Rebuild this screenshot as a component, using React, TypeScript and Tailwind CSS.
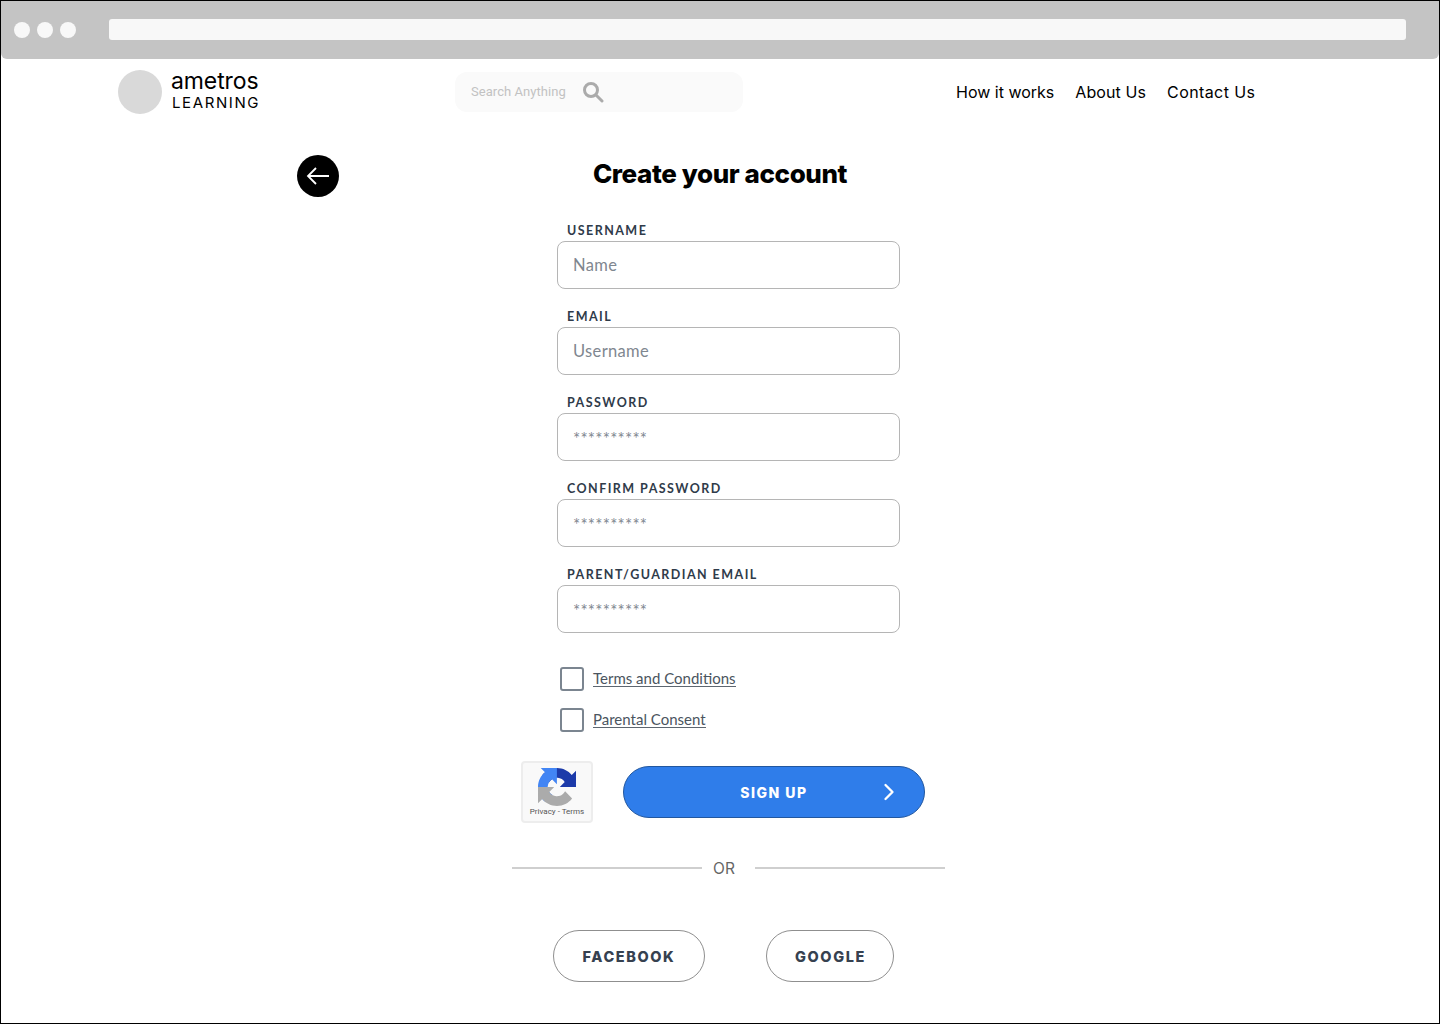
import { ChevronRight } from 'lucide-react';

const fields = [
  { label: 'USERNAME', placeholder: 'Name' },
  { label: 'EMAIL', placeholder: 'Username' },
  { label: 'PASSWORD', placeholder: '**********' },
  { label: 'CONFIRM PASSWORD', placeholder: '**********' },
  { label: 'PARENT/GUARDIAN EMAIL', placeholder: '**********' },
];

const Field = ({ label, placeholder }: { label: string; placeholder: string }) => {
  const stars = placeholder.startsWith('*');
  return (
    <div className="flex flex-col">
      <label className="h-[22px] pl-[10px] pt-[3px] text-[12.5px] leading-[18px] font-bold tracking-[1.45px] text-[#2f3b4a]">
        {label}
      </label>
      <div className="flex h-[48px] items-center rounded-[8px] border border-[#b5b5b5] pl-[15px]">
        <span
          className={
            stars
              ? 'pt-[4px] text-[17px] tracking-[0.2px] text-[#7f8790]'
              : 'text-[16.5px] tracking-[0.35px] text-[#7f8790]'
          }
        >
          {placeholder}
        </span>
      </div>
    </div>
  );
};

const Check = ({ label }: { label: string }) => (
  <div className="flex h-[24px] items-center gap-[9px] pl-[3px]">
    <span className="h-[24px] w-[24px] rounded-[3px] border-2 border-[#7b8590]" />
    <span className="mb-[2px] border-b border-[#5d6670] text-[15px] leading-[16px] text-[#4b5560]">{label}</span>
  </div>
);

const Recaptcha = () => (
  <div className="flex h-[62px] w-[72px] flex-col items-center rounded-[4px] border-2 border-[#ededed] bg-[#f9f9f9] pt-[5px]">
    <svg width="38" height="38" viewBox="0 0 64 64" className="shrink-0">
      <path
        d="M64 31.955l-.033-1.37V4.687l-7.16 7.16C50.948 4.674 42.033.093 32.05.093c-10.4 0-19.622 4.96-25.458 12.64l11.736 11.86a15.55 15.55 0 0 1 4.754-5.334c2.05-1.6 4.952-2.906 8.968-2.906.485 0 .86.057 1.135.163 4.976.393 9.288 3.14 11.828 7.124l-8.307 8.307L64 31.953"
        fill="#1c3aa9"
      />
      <path
        d="M31.862 0l-1.37.033H4.594l7.16 7.16C4.58 13.05 0 21.967 0 31.95c0 10.4 4.96 19.622 12.64 25.458L24.5 45.67a15.55 15.55 0 0 1-5.334-4.754c-1.6-2.05-2.906-4.952-2.906-8.968 0-.485.057-.86.163-1.135.393-4.976 3.14-9.288 7.124-11.828l8.307 8.307L31.86 0"
        fill="#4285f4"
      />
      <path
        d="M.001 31.954l.033 1.37v25.9l7.16-7.16c5.86 7.173 14.774 11.754 24.76 11.754 10.4 0 19.622-4.96 25.458-12.64l-11.736-11.86a15.55 15.55 0 0 1-4.754 5.334c-2.05 1.6-4.952 2.906-8.968 2.906-.485 0-.86-.057-1.135-.163-4.976-.393-9.288-3.14-11.828-7.124l8.307-8.307L0 31.952"
        fill="#ababab"
      />
    </svg>
    <span className="mt-[1px] font-['Roboto',sans-serif] text-[8px] leading-[10px] text-[#555]">Privacy - Terms</span>
  </div>
);

export default function App() {
  return (
    <div className="flex h-[1024px] w-[1440px] flex-col overflow-hidden border border-black bg-white font-['Lato',sans-serif]">
      <div className="flex h-[58px] shrink-0 items-center rounded-b-[6px] bg-[#c4c4c4] pb-[2px] pl-[13px] pr-[33px]">
        <div className="mt-[2px] flex gap-[7px]">
          <span className="h-[16px] w-[16px] rounded-full bg-[#f8f8f8]" />
          <span className="h-[16px] w-[16px] rounded-full bg-[#f8f8f8]" />
          <span className="h-[16px] w-[16px] rounded-full bg-[#f8f8f8]" />
        </div>
        <div className="ml-[33px] h-[21px] flex-1 rounded-[3px] bg-[#f8f8f8]" />
      </div>

      <div className="flex h-[66px] shrink-0 items-center pb-[1px] pl-[117px]">
        <div className="flex w-[337px] items-center gap-[9px]">
          <span className="h-[44px] w-[44px] rounded-full bg-[#d9d9d9]" />
          <div className="flex flex-col font-['Inter',sans-serif] text-black">
            <span className="mt-[-1px] text-[23px] leading-[22px] tracking-[-0.1px]">ametros</span>
            <span className="mt-[1px] pl-[1px] text-[15px] leading-[19px] tracking-[1.6px]">LEARNING</span>
          </div>
        </div>
        <div className="flex h-[40px] w-[288px] items-center gap-[16px] rounded-[12px] bg-[#fafafa] pl-[16px]">
          <span className="pt-[1px] font-['Roboto',sans-serif] text-[13px] tracking-[0.05px] text-[#c2c2c2]">Search Anything</span>
          <svg width="22" height="22" viewBox="0 0 22 22" fill="none" stroke="#ababab" strokeWidth="3">
            <circle cx="9" cy="9" r="6.5" />
            <path d="M14 14 L20 20" strokeLinecap="round" />
          </svg>
        </div>
        <nav className="ml-[213px] flex gap-[21px] font-['Inter',sans-serif] text-[16px] text-black">
          <span>How it works</span>
          <span className="tracking-[0.1px]">About Us</span>
          <span className="tracking-[0.4px]">Contact Us</span>
        </nav>
      </div>

      <div className="mx-auto mt-[30px] flex h-[42px] w-[846px] shrink-0 items-center">
        <span className="flex h-[42px] w-[42px] items-center justify-center rounded-full bg-black">
          <svg width="24" height="20" viewBox="0 0 24 20" fill="none" stroke="white" strokeWidth="1.8">
            <path d="M23 10 H2 M10 2 L2 10 L10 18" />
          </svg>
        </span>
        <h1 className="flex-1 pb-[5px] pr-[42px] text-center font-['Inter',sans-serif] text-[26px] font-extrabold tracking-[-0.4px] text-black">
          Create your account
        </h1>
      </div>

      <div className="ml-[556px] mt-[22px] flex w-[343px] shrink-0 flex-col gap-[16px]">
        {fields.map((f) => (
          <Field key={f.label} label={f.label} placeholder={f.placeholder} />
        ))}
      </div>

      <div className="ml-[556px] mt-[34px] flex flex-col gap-[17px]">
        <Check label="Terms and Conditions" />
        <Check label="Parental Consent" />
      </div>

      <div className="ml-[520px] mt-[29px] flex items-center gap-[30px]">
        <Recaptcha />
        <div className="relative flex h-[52px] w-[302px] items-center justify-center rounded-full border border-[#22579f] bg-[#2f7dea]">
          <span className="font-['Inter',sans-serif] text-[14px] font-extrabold tracking-[1.5px] text-white">SIGN UP</span>
          <ChevronRight className="absolute right-[21px] h-[28px] w-[28px] text-white" strokeWidth={2} />
        </div>
      </div>

      <div className="ml-[511px] mt-[33px] flex h-[23px] w-[433px] items-center">
        <span className="h-[2px] flex-1 bg-[#cfcfcf]" />
        <span className="w-[53px] pr-[9px] pt-[2px] text-center font-['Inter',sans-serif] text-[15.5px] leading-[20px] text-[#666]">OR</span>
        <span className="h-[2px] flex-1 bg-[#cfcfcf]" />
      </div>

      <div className="ml-[552px] mt-[51px] flex gap-[61px] font-['Inter',sans-serif] text-[14.5px] font-extrabold tracking-[1.6px] text-[#364150]">
        <span className="flex h-[52px] w-[152px] items-center justify-center rounded-full border border-[#8f8f8f] pt-[1px]">FACEBOOK</span>
        <span className="flex h-[52px] w-[128px] items-center justify-center rounded-full border border-[#8f8f8f] pl-[1px] pt-[1px]">GOOGLE</span>
      </div>
    </div>
  );
}
